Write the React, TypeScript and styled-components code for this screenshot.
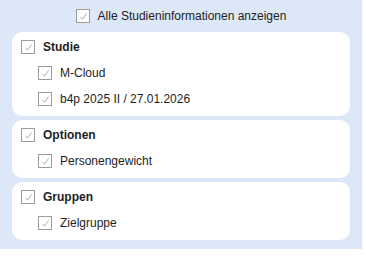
import React from "react";
import styled, { createGlobalStyle } from "styled-components";

const Global = createGlobalStyle`
  html, body { margin: 0; padding: 0; background: #ffffff; }
  body { font-family: "Liberation Sans", Arial, sans-serif; }
`;

const Panel = styled.div`
  width: 362px;
  height: 249px;
  box-sizing: border-box;
  background: #dce8f8;
  padding: 3px 12px 9px 12px;
  display: flex;
  flex-direction: column;
  gap: 4px;
`;

const TopRow = styled.label`
  height: 25px;
  display: flex;
  align-items: center;
  justify-content: center;
  gap: 8px;
  font-size: 12px;
  color: #222;
`;

const Card = styled.div`
  background: #ffffff;
  border-radius: 10px;
  padding: 2px 10px 4px 9px;
  display: flex;
  flex-direction: column;
`;

const Row = styled.label<{ $indent?: boolean; $bold?: boolean }>`
  height: 26px;
  display: flex;
  align-items: center;
  gap: 8px;
  padding-left: ${(p) => (p.$indent ? "17px" : "0")};
  font-size: 12px;
  font-weight: ${(p) => (p.$bold ? 700 : 400)};
  color: #1e1e1e;
`;

const Box = styled.span`
  width: 14px;
  height: 14px;
  box-sizing: border-box;
  border: 1px solid #9c9c9c;
  background: #fff;
  display: inline-flex;
  align-items: center;
  justify-content: center;
  flex: none;
`;

const Check = () => (
  <Box>
    <svg width="12" height="12" viewBox="0 0 12 12">
      <path d="M3.5 7 L5.5 9.2 L9.5 3.5" fill="none" stroke="#a4a4a4" strokeWidth="0.9" />
    </svg>
  </Box>
);

type Group = { title: string; items: string[] };

const groups: Group[] = [
  { title: "Studie", items: ["M-Cloud", "b4p 2025 II / 27.01.2026"] },
  { title: "Optionen", items: ["Personengewicht"] },
  { title: "Gruppen", items: ["Zielgruppe"] },
];

export default function App() {
  return (
    <>
      <Global />
      <Panel>
        <TopRow>
          <Check />
          Alle Studieninformationen anzeigen
        </TopRow>
        {groups.map((g) => (
          <Card key={g.title}>
            <Row $bold>
              <Check />
              {g.title}
            </Row>
            {g.items.map((it) => (
              <Row key={it} $indent>
                <Check />
                {it}
              </Row>
            ))}
          </Card>
        ))}
      </Panel>
    </>
  );
}
